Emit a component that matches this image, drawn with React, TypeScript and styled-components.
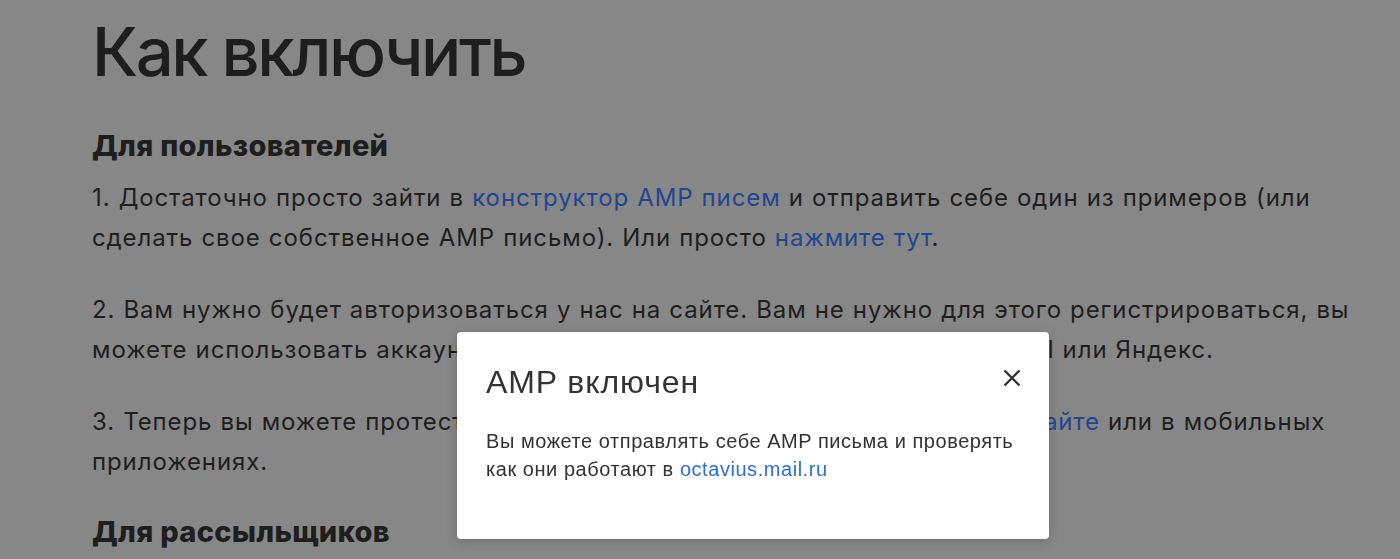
import React from "react";
import styled, { createGlobalStyle } from "styled-components";

const GlobalStyle = createGlobalStyle`
  html, body {
    margin: 0;
    padding: 0;
    background: #878787;
    overflow: hidden;
  }
  * { box-sizing: border-box; }
`;

// Страница под затемнением
const Page = styled.main`
  padding: 12px 0 0 92px;
  width: 1380px;
  font-family: Inter, "Noto Sans", sans-serif;
  color: #1e1e1e;
`;

const Title = styled.h1`
  margin: 0;
  font-size: 67px;
  line-height: 80px;
  font-weight: 500;
  letter-spacing: -2.4px;
`;

const SectionTitle = styled.h2<{ $first?: boolean }>`
  margin: ${(p) => (p.$first ? "36px" : "32px")} 0 0;
  font-size: 29px;
  line-height: 36px;
  font-weight: 800;
  letter-spacing: 0.3px;
`;

const Paragraph = styled.p<{ $first?: boolean }>`
  margin: ${(p) => (p.$first ? "14px" : "32px")} 0 0;
  font-size: 24px;
  line-height: 40px;
  font-weight: 400;
  letter-spacing: 0.9px;
  word-spacing: 0.5px;
`;

const PageLink = styled.a`
  color: #1f4690;
  text-decoration: none;
`;

// Слой модального окна
const Overlay = styled.div`
  position: fixed;
  inset: 0;
`;

const Modal = styled.section`
  position: absolute;
  left: 457px;
  top: 332px;
  width: 592px;
  height: 207px;
  background: #ffffff;
  border-radius: 4px;
  box-shadow: 0 2px 12px rgba(0, 0, 0, 0.18);
  padding: 32px 28px 0 29px;
  font-family: "Liberation Sans", Arial, sans-serif;
  color: #333333;
`;

const ModalHeader = styled.div`
  display: flex;
  align-items: center;
  justify-content: space-between;
`;

const ModalTitle = styled.h3`
  margin: 0;
  font-size: 32px;
  line-height: 36px;
  font-weight: 400;
  letter-spacing: 0.9px;
`;

const CloseButton = styled.button`
  display: flex;
  align-items: center;
  justify-content: center;
  width: 18px;
  height: 18px;
  padding: 0;
  margin-top: -8px;
  border: none;
  background: none;
  cursor: pointer;
`;

const ModalText = styled.p`
  margin: 27px 0 0;
  font-size: 20px;
  line-height: 28px;
  letter-spacing: 0.55px;
`;

const ModalLink = styled.a`
  color: #2a6fdb;
  text-decoration: none;
`;

const CloseIcon = () => (
  <svg width="18" height="18" viewBox="0 0 18 18">
    <path d="M1.5 1.5 L16.5 16.5 M16.5 1.5 L1.5 16.5" stroke="#333" strokeWidth="2.4" strokeLinecap="butt" />
  </svg>
);

export default function App() {
  return (
    <>
      <GlobalStyle />
      <Page>
        <Title>Как включить</Title>
        <SectionTitle $first>Для пользователей</SectionTitle>
        <Paragraph $first>
          1. Достаточно просто зайти в <PageLink href="#">конструктор AMP писем</PageLink> и отправить себе один из
          примеров (или сделать свое собственное AMP письмо). Или просто <PageLink href="#">нажмите тут</PageLink>.
        </Paragraph>
        <Paragraph>
          2. Вам нужно будет авторизоваться у нас на сайте. Вам не нужно для этого регистрироваться, вы можете
          использовать аккаунт Mail.Ru, Google, Facebook, VK, Outlook, Gmail или Яндекс.
        </Paragraph>
        <Paragraph>
          3. Теперь вы можете протестировать AMP письма в веб-почте на нашем <PageLink href="#">сайте</PageLink> или в
          мобильных приложениях.
        </Paragraph>
        <SectionTitle>Для рассыльщиков</SectionTitle>
      </Page>
      <Overlay>
        <Modal>
          <ModalHeader>
            <ModalTitle>AMP включен</ModalTitle>
            <CloseButton aria-label="Закрыть">
              <CloseIcon />
            </CloseButton>
          </ModalHeader>
          <ModalText>
            Вы можете отправлять себе AMP письма и проверять как они работают в{" "}
            <ModalLink href="#">octavius.mail.ru</ModalLink>
          </ModalText>
        </Modal>
      </Overlay>
    </>
  );
}
